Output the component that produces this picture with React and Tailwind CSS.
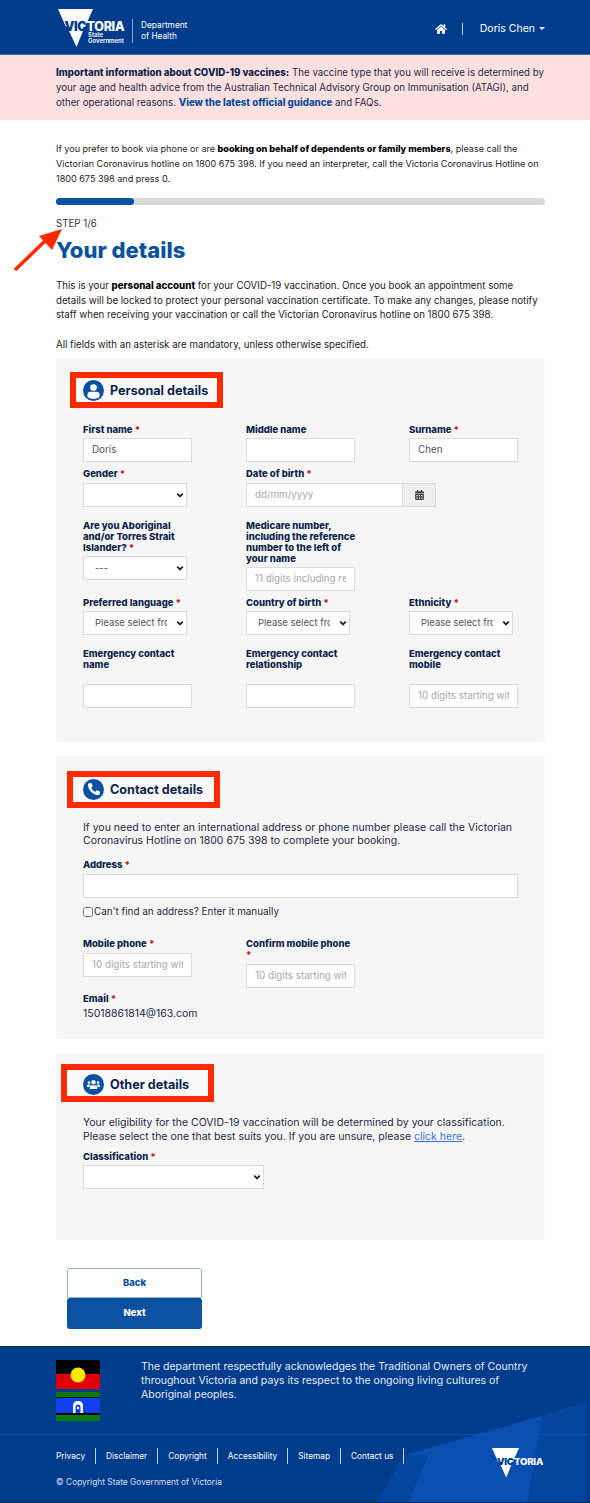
import { FaHome, FaCalendarAlt, FaPhoneAlt, FaUsers } from "react-icons/fa";

const font = "font-['Inter',sans-serif]";

function Logo({ className, small }) {
  return (
    <svg viewBox="0 0 70 40" className={className}>
      <polygon points="0,0 35,0 27,18 25,18 25,22 18.5,38 11,22 12,18 8,18" fill="#fff" />
      <text x="6.5" y="21.5" fontFamily="Inter, sans-serif" fontWeight="900" fontSize="12.5" fill="#003c8c" textLength="22">VIC</text>
      <text x="28.5" y="21.5" fontFamily="Inter, sans-serif" fontWeight="800" fontSize="12.5" fill="#fff" textLength="38">TORIA</text>
      {!small && (
        <g fontFamily="Inter, sans-serif" fontWeight="600" fontSize="6" fill="#fff">
          <text x="30" y="28">State</text>
          <text x="30" y="33.5">Government</text>
        </g>
      )}
    </svg>
  );
}

function Label({ children, req, className = "" }) {
  return (
    <div className={`text-[9.5px] leading-[11px] font-extrabold whitespace-nowrap text-[#0c1f4d] ${className}`}>
      {children}
      {req && <span className="text-[#c4262e]"> *</span>}
    </div>
  );
}

function TextInput({ value, placeholder, className = "w-[109px]" }) {
  return (
    <input
      readOnly
      value={value}
      placeholder={placeholder}
      className={`block h-6 border border-[#dcdcdc] bg-white px-2 text-[9.8px] text-[#555] placeholder:text-[#a9a9a9] outline-none ${className}`}
    />
  );
}

function Select({ value, className = "w-[104px]", pad = "pl-[11px] pr-[19px]" }) {
  return (
    <div className={`relative h-6 ${className}`}>
      <select
        defaultValue={value}
        className={`h-full w-full appearance-none border border-[#dcdcdc] bg-white ${pad} text-[9.5px] text-[#555] outline-none`}
      >
        <option>{value}</option>
      </select>
      <svg viewBox="0 0 10 10" className="absolute right-[3px] top-[8px] h-2 w-2" fill="none" stroke="#222" strokeWidth="2.2">
        <path d="M1.5 3.2 5 6.8l3.5-3.6" />
      </svg>
    </div>
  );
}

function Row({ children, className = "" }) {
  return <div className={`grid grid-cols-[109px_109px_109px] gap-x-[54px] ${className}`}>{children}</div>;
}

function SectionTitle({ icon, title, className }) {
  return (
    <div className={`flex w-[153px] items-center gap-[6px] border-[6px] border-[#ff2a00] bg-[#f9f9f9] ${className}`}>
      <span className="flex h-[21px] w-[21px] shrink-0 items-center justify-center overflow-hidden rounded-full bg-[#0a52a1] text-white">
        {icon}
      </span>
      <span className="text-[12.6px] leading-[15px] font-bold whitespace-nowrap text-[#0c1f4d]">{title}</span>
    </div>
  );
}

export default function App() {
  return (
    <div className={`relative h-[1503px] w-[590px] overflow-hidden bg-white text-[9.7px] text-[#1e2a44] ${font}`}>
      {/* header */}
      <header className="flex h-[55px] items-center border-b border-[#3d6aa8] bg-[#003c8c] pt-[3px] pl-[58px] pr-[45px] text-white">
        <Logo className="h-[40px] w-[70px]" />
        <div className="mt-[4px] ml-[4px] flex h-[24px] items-center border-l border-[#8aa6cf] pl-[8px] text-[8.3px] leading-[11px]">
          Department
          <br />
          of Health
        </div>
        <FaHome className="ml-auto h-[12px] w-[12px]" />
        <span className="ml-[15px] h-[12px] border-l border-[#c5d2e6]" />
        <span className="ml-[17px] text-[10.5px]">Doris Chen</span>
        <span className="ml-[4px] border-x-[3px] border-t-[3px] border-x-transparent border-t-white" />
      </header>

      {/* covid banner */}
      <div className="h-[65px] bg-[#fde0e0] pt-[10px] pr-[45px] pl-[56px] leading-[15px]">
        <b className="font-extrabold text-[#0c1f4d]">Important information about COVID-19 vaccines:</b> The vaccine type that you will receive is determined by your age and health advice from the Australian Technical Advisory Group on Immunisation (ATAGI), and other operational reasons.{" "}
        <b className="font-extrabold text-[#0a4d9c]">View the latest official guidance</b> and FAQs.
      </div>

      <main className="pr-[45px] pl-[56px]">
        <p className="pt-[21px] text-[9.05px] leading-[15px] text-[#222]">
          If you prefer to book via phone or are <b className="font-extrabold text-black">booking on behalf of dependents or family members</b>, please call the Victorian Coronavirus hotline on 1800 675 398. If you need an interpreter, call the Victoria Coronavirus Hotline on 1800 675 398 and press 0.
        </p>

        <div className="mt-[12px] h-[7px] rounded-full bg-[#d9dad6]">
          <div className="h-full w-[16%] rounded-full bg-[#0a52a1]" />
        </div>

        <div className="mt-[13px] leading-[12px] text-[#333]">STEP 1/6</div>
        <h1 className="mt-[6px] text-[22px] leading-[28px] font-extrabold text-[#0a52a1]">Your details</h1>

        <p className="mt-[15px] leading-[14.7px] text-[#222]">
          This is your <b className="font-extrabold text-black">personal account</b> for your COVID-19 vaccination. Once you book an appointment some details will be locked to protect your personal vaccination certificate. To make any changes, please notify staff when receiving your vaccination or call the Victorian Coronavirus hotline on 1800 675 398.
        </p>
        <p className="mt-[15px] leading-[14.7px] text-[#222]">All fields with an asterisk are mandatory, unless otherwise specified.</p>

        {/* personal details */}
        <section className="mt-[6px] h-[383px] rounded-[3px] bg-[#f6f6f6] pt-[13px]">
          <SectionTitle
            className="ml-[14px] h-[36px] pt-[2px] pl-[7px]"
            title="Personal details"
            icon={
              <svg viewBox="0 0 21 21" className="h-[21px] w-[21px]" fill="#fff">
                <circle cx="10.5" cy="7.5" r="3.3" />
                <path d="M4.5 17v-2.200q0-3 3-3h6q3 0 3 3v2.200q-3 2-6 2t-6-2z" />
              </svg>
            }
          />
          <div className="pl-[27px]">
            <Row className="mt-[16px]">
              <div>
                <Label req className="mb-[3px]">First name</Label>
                <TextInput value="Doris" />
              </div>
              <div>
                <Label className="mb-[3px]">Middle name</Label>
                <TextInput value="" />
              </div>
              <div>
                <Label req className="mb-[3px]">Surname</Label>
                <TextInput value="Chen" />
              </div>
            </Row>
            <Row className="mt-[6px]">
              <div>
                <Label req className="mb-[4px]">Gender</Label>
                <Select value="" />
              </div>
              <div className="col-span-2">
                <Label req className="mb-[4px]">Date of birth</Label>
                <div className="flex">
                  <TextInput value="" placeholder="dd/mm/yyyy" className="w-[157px]" />
                  <span className="flex h-6 w-[33px] items-center justify-center border border-l-0 border-[#dcdcdc] bg-[#eeeeee]">
                    <FaCalendarAlt className="h-[10px] w-[9px] text-[#444]" />
                  </span>
                </div>
              </div>
            </Row>
            <Row className="mt-[13px]">
              <div>
                <Label req className="mb-[3px]">
                  Are you Aboriginal
                  <br />
                  and/or Torres Strait
                  <br />
                  Islander?
                </Label>
                <Select value="---" />
              </div>
              <div>
                <Label className="mb-[3px]">
                  Medicare number,
                  <br />
                  including the reference
                  <br />
                  number to the left of
                  <br />
                  your name
                </Label>
                <TextInput value="" placeholder="11 digits including reference" />
              </div>
            </Row>
            <Row className="mt-[6px]">
              <div>
                <Label req className="mb-[3px]">Preferred language</Label>
                <Select value="Please select from list" />
              </div>
              <div>
                <Label req className="mb-[3px]">Country of birth</Label>
                <Select value="Please select from list" />
              </div>
              <div>
                <Label req className="mb-[3px]">Ethnicity</Label>
                <Select value="Please select from list" />
              </div>
            </Row>
            <Row className="mt-[13px]">
              <div>
                <Label className="mb-[14px]">
                  Emergency contact
                  <br />
                  name
                </Label>
                <TextInput value="" />
              </div>
              <div>
                <Label className="mb-[14px]">
                  Emergency contact
                  <br />
                  relationship
                </Label>
                <TextInput value="" />
              </div>
              <div>
                <Label className="mb-[14px]">
                  Emergency contact
                  <br />
                  mobile
                </Label>
                <TextInput value="" placeholder="10 digits starting with 04" />
              </div>
            </Row>
          </div>
        </section>

        {/* contact details */}
        <section className="mt-[14px] h-[283px] rounded-[3px] bg-[#f6f6f6] pt-[15px]">
          <SectionTitle
            className="ml-[11px] h-[37px] pl-[10px]"
            title="Contact details"
            icon={<FaPhoneAlt className="h-[12px] w-[12px]" />}
          />
          <div className="pl-[27px]">
            <p className="mt-[13px] w-[440px] text-[10.5px] leading-[13.5px]">
              If you need to enter an international address or phone number please call the Victorian Coronavirus Hotline on 1800 675 398 to complete your booking.
            </p>
            <Label req className="mt-[11px] mb-[4px]">Address</Label>
            <TextInput value="" className="w-[435px]" />
            <label className="mt-[8px] flex h-[12px] items-center gap-[1px] text-[9.9px]">
              <input type="checkbox" className="m-0 h-[10px] w-[10px]" />
              Can't find an address? Enter it manually
            </label>
            <Row className="mt-[20px]">
              <div>
                <Label req className="mb-[4px]">Mobile phone</Label>
                <TextInput value="" placeholder="10 digits starting with 04" />
              </div>
              <div>
                <Label className="mb-[4px]">
                  Confirm mobile phone
                  <br />
                  <span className="text-[#c4262e]">*</span>
                </Label>
                <TextInput value="" placeholder="10 digits starting with 04" />
              </div>
            </Row>
            <Label req className="mt-[5px]">Email</Label>
            <div className="mt-[3px] text-[10.5px] leading-[14px]">15018861814@163.com</div>
          </div>
        </section>

        {/* other details */}
        <section className="mt-[14px] h-[187px] rounded-[3px] bg-[#f6f6f6] pt-[11px]">
          <SectionTitle
            className="ml-[5px] h-[38px] pt-[4px] pl-[16px]"
            title="Other details"
            icon={<FaUsers className="h-[13px] w-[13px]" />}
          />
          <div className="pl-[27px]">
            <p className="mt-[14px] w-[440px] text-[10.5px] leading-[14px]">
              Your eligibility for the COVID-19 vaccination will be determined by your classification. Please select the one that best suits you. If you are unsure, please{" "}
              <a className="text-[#3b6fe0] underline">click here</a>.
            </p>
            <Label req className="mt-[7px] mb-[3px]">Classification</Label>
            <Select value="" className="w-[181px]" />
          </div>
        </section>

        <div className="mt-[28px] ml-[11px] w-[135px] text-[9.5px] font-extrabold">
          <button className="block h-[30px] w-full rounded-t-[3px] border border-[#8fb0d6] bg-white text-[#0a52a1]">Back</button>
          <button className="block h-[31px] w-full rounded-[3px] bg-[#0a52a1] text-white">Next</button>
        </div>
      </main>

      {/* footer */}
      <footer className="relative mt-[17px] h-[157px] overflow-hidden border-y border-[#0d2b58] bg-[#003c8c] text-white">
        <svg viewBox="0 0 590 157" className="absolute inset-0 h-full w-full">
          <polygon points="405,110 590,56 590,157 378,157" fill="#0445a0" />
          <polygon points="405,110 545,70 530,157 410,157 430,110" fill="#0a4fb0" />
        </svg>
        <div className="relative flex h-[88px] items-start border-b border-[#0a52b0] pt-[13px] pl-[56px]">
          <svg viewBox="0 0 44 61" className="h-[61px] w-[44px]">
            <rect width="44" height="14" fill="#000" />
            <rect y="14" width="44" height="15" fill="#e00000" />
            <circle cx="22" cy="15" r="7.5" fill="#ffeb00" />
            <rect y="32" width="44" height="29" fill="#000" />
            <rect y="32" width="44" height="5" fill="#0a7a10" />
            <rect y="38" width="44" height="15" fill="#1040f0" />
            <rect y="55" width="44" height="6" fill="#0a7a10" />
            <path d="M17 53v-7q0-5 5-5t5 5v7h-2.500v-6q0-2.500-2.500-2.500t-2.500 2.500v6z" fill="#fff" />
            <circle cx="22" cy="48" r="1.3" fill="#fff" />
          </svg>
          <p className="ml-[41px] w-[400px] text-[10.5px] leading-[14px] text-[#e6ebf4]">
            The department respectfully acknowledges the Traditional Owners of Country throughout Victoria and pays its respect to the ongoing living cultures of Aboriginal peoples.
          </p>
        </div>
        <div className="relative mt-[13px] flex pl-[56px] text-[8.3px] leading-[16px]">
          <span className="border-r border-[#c5d2e6] pr-[10px]">Privacy</span>
          <span className="border-r border-[#c5d2e6] px-[10px]">Disclaimer</span>
          <span className="border-r border-[#c5d2e6] px-[10px]">Copyright</span>
          <span className="border-r border-[#c5d2e6] px-[10px]">Accessibility</span>
          <span className="border-r border-[#c5d2e6] px-[10px]">Sitemap</span>
          <span className="border-r border-[#c5d2e6] px-[10px]">Contact us</span>
        </div>
        <div className="relative mt-[13px] pl-[56px] text-[8.4px] leading-[10px] text-[#d5deec]">© Copyright State Government of Victoria</div>
        <Logo small className="absolute top-[101px] left-[492px] h-[31px] w-[54px]" />
      </footer>

      {/* annotation arrow */}
      <svg viewBox="0 0 70 60" className="absolute top-[220px] left-[0px] h-[60px] w-[70px]">
        <line x1="15" y1="50" x2="46" y2="20" stroke="#ff2a00" strokeWidth="3.5" />
        <polygon points="62,9 39,16 52,30" fill="#ff2a00" />
      </svg>
    </div>
  );
}
